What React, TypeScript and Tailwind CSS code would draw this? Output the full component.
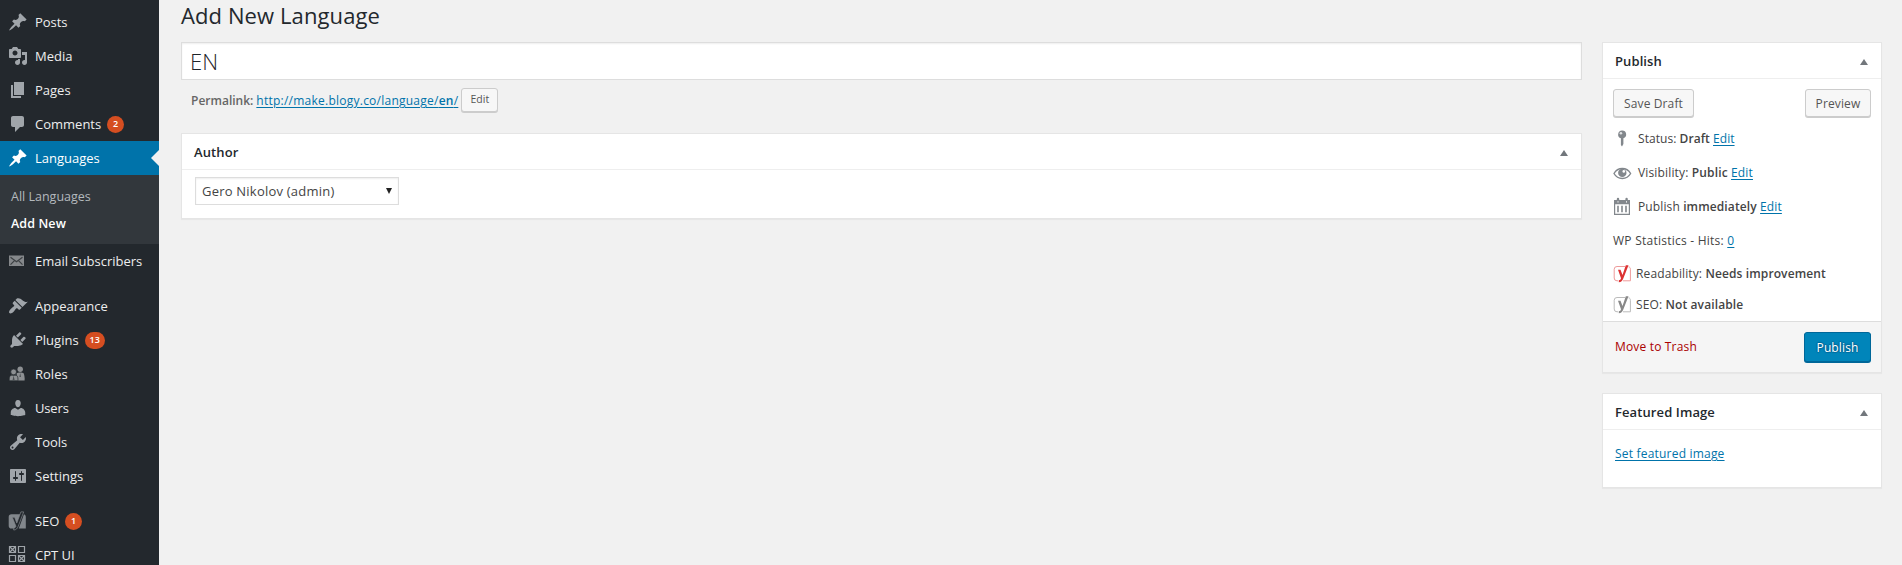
import type { ReactNode } from 'react';

const PATHS = {
  pin: 'M10.44 3.02l1.82-1.82 6.36 6.35-1.83 1.82c-1.05-.68-2.48-.57-3.41.36l-.75.75c-.92.93-1.04 2.35-.35 3.41l-1.83 1.82-2.41-2.41-2.8 2.79c-.42.42-3.38 2.71-3.8 2.29s1.86-3.39 2.28-3.81l2.79-2.79L4.1 9.36l1.83-1.82c1.05.69 2.48.57 3.4-.36l.75-.75c.93-.92 1.05-2.35.36-3.41z',
  media: 'M13 11V4c0-.55-.45-1-1-1h-1.67L9 1H5L3.67 3H2c-.55 0-1 .45-1 1v7c0 .55.45 1 1 1h10c.55 0 1-.45 1-1zM7 4.5c1.38 0 2.5 1.12 2.5 2.5S8.38 9.5 7 9.5 4.5 8.38 4.5 7 5.62 4.5 7 4.5zM14 6h5v10.5c0 1.38-1.12 2.5-2.5 2.5S14 17.88 14 16.5s1.12-2.5 2.5-2.5c.17 0 .34.02.5.05V9h-3V6zm-4 8.05V13h2v3.5c0 1.38-1.12 2.5-2.5 2.5S7 17.88 7 16.5 8.12 14 9.5 14c.17 0 .34.02.5.05z',
  pages: 'M6 15V2h10v13H6zm-1 1h8v2H3V5h2v11z',
  comments: 'M5 2h9c1.1 0 2 .9 2 2v7c0 1.1-.9 2-2 2h-2l-5 5v-5H5c-1.1 0-2-.9-2-2V4c0-1.1.9-2 2-2z',
  appearance: 'M14.48 11.06L7.41 3.99l1.5-1.5c.5-.56 2.3-.47 3.51.32 1.21.8 1.43 1.28 2.91 2.1 1.18.64 2.45 1.26 4.45.85zm-.71.71L6.7 4.7 4.93 6.47c-.39.39-.39 1.02 0 1.41l1.06 1.06c.39.39.39 1.03 0 1.42-.6.6-1.43 1.11-2.21 1.69-.35.26-.7.53-1.01.84C1.43 14.23.4 16.08 1.4 17.07c.99 1 2.84-.03 4.18-1.36.31-.31.58-.66.85-1.02.57-.78 1.08-1.61 1.69-2.21.39-.39 1.02-.39 1.41 0l1.06 1.06c.39.39 1.02.39 1.41 0z',
  plugins: 'M13.11 4.36L9.87 7.6 8 5.73l3.24-3.24c.35-.34 1.05-.2 1.56.32.52.51.66 1.21.31 1.55zm-8 1.77l.91-1.12 9.01 9.01-1.19.84c-.71.71-2.63 1.16-3.82 1.16H6.14L4.9 17.26c-.59.59-1.54.59-2.12 0-.59-.58-.59-1.53 0-2.12l1.24-1.24v-3.88c0-1.13.4-3.19 1.09-3.89zm7.26 3.97l3.24-3.24c.34-.35 1.04-.21 1.55.31.52.51.66 1.21.31 1.55l-3.24 3.25z',
  users: 'M10 9.25c-2.27 0-2.73-3.44-2.73-3.44C7 4.02 7.82 2 9.97 2c2.16 0 2.98 2.02 2.71 3.81 0 0-.41 3.44-2.68 3.44zm0 2.57L12.72 10c2.39 0 4.52 2.33 4.52 4.53v2.49s-3.65 1.13-7.24 1.13c-3.65 0-7.24-1.13-7.24-1.13v-2.49c0-2.25 1.94-4.48 4.47-4.48z',
  tools: 'M16.68 9.77c-1.34 1.34-3.3 1.67-4.95.99l-5.41 6.52c-.99.99-2.59.99-3.58 0s-.99-2.59 0-3.57l6.52-5.42c-.68-1.65-.35-3.61.99-4.95 1.28-1.28 3.12-1.62 4.72-1.06l-2.89 2.89 2.82 2.82 2.86-2.87c.53 1.58.18 3.39-1.08 4.65zM3.81 16.21c.4.39 1.04.39 1.43 0 .4-.4.4-1.04 0-1.43-.39-.4-1.03-.4-1.43 0-.39.39-.39 1.03 0 1.43z',
  settings: 'M18 16V4c0-.55-.45-1-1-1H3c-.55 0-1 .45-1 1v12c0 .55.45 1 1 1h14c.55 0 1-.45 1-1zM8 11h1c.55 0 1 .45 1 1s-.45 1-1 1H8v1.5c0 .28-.22.5-.5.5s-.5-.22-.5-.5V13H6c-.55 0-1-.45-1-1s.45-1 1-1h1V5.5c0-.28.22-.5.5-.5s.5.22.5.5V11zm5-2h-1c-.55 0-1-.45-1-1s.45-1 1-1h1V5.5c0-.28.22-.5.5-.5s.5.22.5.5V7h1c.55 0 1 .45 1 1s-.45 1-1 1h-1v5.5c0 .28-.22.5-.5.5s-.5-.22-.5-.5V9z',
};

function Glyph({ d }: { d: string }) {
  return (
    <svg viewBox="0 0 20 20" className="size-5" fill="currentColor">
      <path d={d} />
    </svg>
  );
}

function MailIcon() {
  return (
    <svg viewBox="0 0 20 20" className="size-5">
      <rect x="1" y="4.5" width="15" height="10.5" fill="#85888b" />
      <path d="M2.500 6.200l6 4.600 6-4.600M2.500 13.700l4-4M14.500 13.700l-4-4" fill="none" stroke="#3c4043" strokeWidth="1.200" />
    </svg>
  );
}

function RolesIcon() {
  return (
    <svg viewBox="0 0 20 20" className="size-5" fill="#8d9093">
      <circle cx="12.2" cy="5.2" r="2.7" />
      <path d="M8.600 9.200c1-1 6-1 7 0 .7 1.200 1.300 5 1 7.200H9z" />
      <path d="M1.300 16.800c-.3-2.300.1-4.800 1.500-5.600h5.600c1.400.8 1.800 3.300 1.500 5.600z" stroke="#23282d" strokeWidth=".7" />
      <circle cx="5.600" cy="7.900" r="2.900" stroke="#23282d" strokeWidth=".7" />
      <path d="M5.600 11.400l-1 4.600h2zM12.200 9l-.8 4h1.600z" fill="#4a4e52" />
    </svg>
  );
}

function SeoIcon() {
  return (
    <svg viewBox="0 0 20 20" className="size-5">
      <path d="M3.500 3.200H13L8.500 17.600H3.500A2.800 2.800 0 0 1 .7 14.800V6a2.800 2.800 0 0 1 2.800-2.800zM16 3.300c1.200.4 1.800 1.400 1.800 2.700v11.600h-7z" fill="#82878c" />
      <path d="M4.300 6.300h2.300l2.200 5.800L12.900.9H15.700l-5.400 14.200c-.9 2.500-2.300 3.900-4.600 3.900v-2c1.200 0 1.900-.6 2.200-1.800z" fill="#23282d" stroke="#82878c" strokeWidth=".7" />
    </svg>
  );
}

function CptIcon() {
  return (
    <svg viewBox="0 0 20 20" className="size-5" fill="none" stroke="#9ea3a8" strokeWidth="1.200">
      <path d="M1.500 1.500h6v6h-6zM10.500 1.500h6v6h-6zM1.500 10.500h6v6h-6zM10.500 10.500h6v6h-6z" />
      <path d="M2 2l5 5M7 2L2 7M11 11l5 5M16 11l-5 5" />
    </svg>
  );
}

function Badge({ children }: { children: ReactNode }) {
  return (
    <span className="ml-1.5 flex h-[17px] min-w-[17px] items-center justify-center rounded-full bg-[#d54e21] px-[5px] text-[9px] font-semibold text-white">
      {children}
    </span>
  );
}

type ItemProps = { icon: ReactNode; label: string; track?: string; badge?: string; active?: boolean };

function MenuItem({ icon, label, track = 'tracking-normal', badge, active }: ItemProps) {
  return (
    <a
      className={
        active
          ? 'relative flex h-[34px] shrink-0 items-center bg-[#0073aa] text-white'
          : 'relative flex h-[34px] shrink-0 items-center text-[#eee]'
      }
    >
      <span className={active ? 'ml-2 w-[27px] text-white' : 'ml-2 w-[27px] text-[#a0a5aa]'}>{icon}</span>
      <span className={`pt-0.5 text-[13px] whitespace-nowrap ${track}`}>{label}</span>
      {badge && <Badge>{badge}</Badge>}
      {active && (
        <span className="absolute top-[9px] right-0 border-y-8 border-r-8 border-y-transparent border-r-[#f1f1f1]" />
      )}
    </a>
  );
}

function Sidebar() {
  return (
    <nav className="flex h-full w-[159px] shrink-0 flex-col overflow-hidden bg-[#23282d] pt-[5px]">
      <MenuItem icon={<Glyph d={PATHS.pin} />} label="Posts" track="tracking-[-0.05px]" />
      <MenuItem icon={<Glyph d={PATHS.media} />} label="Media" />
      <MenuItem icon={<Glyph d={PATHS.pages} />} label="Pages" />
      <MenuItem icon={<Glyph d={PATHS.comments} />} label="Comments" badge="2" />
      <MenuItem icon={<Glyph d={PATHS.pin} />} label="Languages" active />
      <div className="flex h-[69px] shrink-0 flex-col bg-[#32373c] pt-2 pl-[11px] text-[12.5px]">
        <a className="h-[27px] leading-[27px] text-[#b4b9be]">All Languages</a>
        <a className="h-[27px] leading-[27px] font-semibold tracking-[0.1px] text-white">Add New</a>
      </div>
      <MenuItem icon={<MailIcon />} label="Email Subscribers" />
      <div className="h-[11px] shrink-0" />
      <MenuItem icon={<Glyph d={PATHS.appearance} />} label="Appearance" />
      <MenuItem icon={<Glyph d={PATHS.plugins} />} label="Plugins" badge="13" />
      <MenuItem icon={<RolesIcon />} label="Roles" />
      <MenuItem icon={<Glyph d={PATHS.users} />} label="Users" track="tracking-[-0.15px]" />
      <MenuItem icon={<Glyph d={PATHS.tools} />} label="Tools" />
      <MenuItem icon={<Glyph d={PATHS.settings} />} label="Settings" />
      <div className="h-[11px] shrink-0" />
      <MenuItem icon={<SeoIcon />} label="SEO" track="tracking-[-0.1px]" badge="1" />
      <MenuItem icon={<CptIcon />} label="CPT UI" />
    </nav>
  );
}

function Panel({ title, className, children }: { title: string; className: string; children: ReactNode }) {
  return (
    <section className={`flex flex-col border border-[#e5e5e5] bg-white shadow-[0_1px_1px_rgba(0,0,0,0.04)] ${className}`}>
      <header className="flex h-[36px] shrink-0 items-center justify-between border-b border-[#eee] pr-[13px] pl-3">
        <h2 className="pt-0.5 text-[13px] font-semibold tracking-[0.1px] text-[#23282d]">{title}</h2>
        <svg viewBox="0 0 8 6" className="mt-[3px] h-1.5 w-2" fill="#72777c">
          <path d="M4 0l4 6H0z" />
        </svg>
      </header>
      {children}
    </section>
  );
}

function Button({ className, children }: { className: string; children: ReactNode }) {
  return (
    <button
      className={`flex items-center justify-center rounded-[3px] border border-[#ccc] bg-[#f7f7f7] whitespace-nowrap text-[#555] shadow-[0_1px_0_#ccc] ${className}`}
    >
      {children}
    </button>
  );
}

function Link({ children }: { children: ReactNode }) {
  return <a className="text-[#0073aa] underline underline-offset-2">{children}</a>;
}

function KeyIcon() {
  return (
    <svg viewBox="0 0 20 20" className="size-5">
      <path d="M9 1.500a4 4 0 0 1 1.400 7.800V15L9 17.500 7.900 16V9.300A4 4 0 0 1 9 1.500z" fill="#82878c" />
      <circle cx="7.900" cy="4.300" r="1.300" fill="#dfe1e3" />
    </svg>
  );
}

function EyeIcon() {
  return (
    <svg viewBox="0 0 20 20" className="size-5">
      <path d="M1 10.500C3 7 6 5.500 9.300 5.500s6.300 1.500 8.300 5c-2 3.500-5 5-8.300 5S3 14 1 10.500z" fill="none" stroke="#82878c" strokeWidth="1.400" />
      <circle cx="9.300" cy="9.900" r="4.200" fill="#82878c" />
      <circle cx="10.800" cy="8.400" r="1.300" fill="#fff" />
    </svg>
  );
}

function CalendarIcon() {
  return (
    <svg viewBox="0 0 20 20" className="size-5" fill="#82878c">
      <path fillRule="evenodd" d="M1 3h2.800V2a1.200 1.200 0 0 1 2.400 0v1h6.200V2a1.200 1.200 0 0 1 2.400 0v1H17v15H1zM2.200 7.200v9.600h13.600V7.200z" />
      <path d="M4.200 8.700h1.600v6.600H4.200zM8.200 8.700h1.600v6.600H8.200zM12.200 8.700h1.600v6.600h-1.600z" />
      <path d="M4.500 4.200h1v1.200h-1zM13 4.200h1v1.200h-1z" fill="#fff" />
    </svg>
  );
}

function YoastIcon({ color, pale }: { color: string; pale: string }) {
  return (
    <svg viewBox="0 0 20 20" className="size-5">
      <path d="M12 2.500H4A2.800 2.800 0 0 0 1.200 5.300V14A2.800 2.800 0 0 0 4 16.800h1M15.500 2.700c1.300.3 1.900 1.200 1.900 2.600v11.500H10" fill="none" stroke={pale} strokeWidth="1" />
      <path d="M5 5.700h2.500L9.500 11l3.300-9.800h2.700L10.300 14.500c-.9 2.300-2.200 3.700-4.500 3.800v-2c1.300-.1 1.900-.8 2.200-2z" fill={color} />
    </svg>
  );
}

function Row({ icon, className, children }: { icon?: ReactNode; className: string; children: ReactNode }) {
  return (
    <div className={`flex items-center whitespace-nowrap ${className}`}>
      {icon}
      <span>{children}</span>
    </div>
  );
}

function Editor() {
  return (
    <main className="ml-[22px] flex w-[1401px] shrink-0 flex-col">
      <h1 className="h-[42px] text-[22px] leading-[30px] tracking-[0.1px] whitespace-nowrap text-[#23282d]">Add New Language</h1>
      <div className="flex h-[38px] items-center border border-[#ddd] bg-white pl-2 text-[22px] font-light text-[#1f2429] shadow-[inset_0_1px_2px_rgba(0,0,0,0.07)]">
        EN
      </div>
      <div className="mt-2 flex h-[26px] items-center pl-[10px] text-[12px] whitespace-nowrap text-[#666]">
        <span className="font-semibold">Permalink:</span>
        <a className="ml-[3px] tracking-[0.24px] text-[#0073aa] underline underline-offset-2">
          http://make.blogy.co/language/<span className="font-semibold">en</span>/
        </a>
        <Button className="ml-[3px] h-6 w-[37px] self-start text-[10.5px]">Edit</Button>
      </div>
      <Panel title="Author" className="mt-[19px] h-[86px]">
        <div className="mt-[7px] ml-[13px] flex h-7 w-[204px] items-center justify-between border border-[#ddd] pr-1.5 pl-1.5 text-[13px] tracking-[0.22px] text-[#444] shadow-[inset_0_1px_2px_rgba(0,0,0,0.07)]">
          <span className="pt-0.5">Gero Nikolov (admin)</span>
          <svg viewBox="0 0 6 6" className="size-1.5" fill="#222">
            <path d="M0 0h6L3 6z" />
          </svg>
        </div>
      </Panel>
    </main>
  );
}

function PublishPanel() {
  return (
    <Panel title="Publish" className="h-[331px] text-[12px] tracking-[0.12px] text-[#444]">
      <div className="mx-[10px] mt-[10px] flex h-[29px] shrink-0 justify-between">
        <Button className="h-7 w-[81px] pt-0.5">Save Draft</Button>
        <Button className="h-7 w-[66px] pt-0.5">Preview</Button>
      </div>
      <div className="flex grow flex-col pt-1 pl-[10px]">
        <Row icon={<KeyIcon />} className="h-[34px] gap-[5px] tracking-[0.05px]">
          Status: <b className="font-semibold">Draft</b> <Link>Edit</Link>
        </Row>
        <Row icon={<EyeIcon />} className="h-[34px] gap-[5px] tracking-[0.15px]">
          Visibility: <b className="font-semibold">Public</b> <Link>Edit</Link>
        </Row>
        <Row icon={<CalendarIcon />} className="h-[34px] gap-[5px]">
          Publish <b className="font-semibold">immediately</b> <Link>Edit</Link>
        </Row>
        <Row className="h-[34px] tracking-[0.24px]">
          WP Statistics - Hits: <Link>0</Link>
        </Row>
        <Row icon={<YoastIcon color="#dc3232" pale="#ee9a9a" />} className="h-[31px] gap-[3px]">
          Readability: <b className="font-semibold">Needs improvement</b>
        </Row>
        <Row icon={<YoastIcon color="#888" pale="#bbb" />} className="h-[32px] gap-[3px]">
          SEO: <b className="font-semibold">Not available</b>
        </Row>
      </div>
      <footer className="flex h-[51px] shrink-0 items-center justify-between border-t border-[#ddd] bg-[#f5f5f5] pr-[10px] pl-3">
        <a className="tracking-[0.17px] text-[#a00]">Move to Trash</a>
        <button className="flex h-[30px] w-[67px] items-center justify-center rounded-[3px] border border-[#006799] bg-[#0085ba] pt-0.5 text-white shadow-[0_1px_0_#006799] [text-shadow:0_-1px_1px_#006799,1px_0_1px_#006799,0_1px_1px_#006799,-1px_0_1px_#006799]">
          Publish
        </button>
      </footer>
    </Panel>
  );
}

export default function App() {
  return (
    <div className="flex h-[565px] w-[1902px] overflow-hidden bg-[#f1f1f1] font-['Open_Sans','Noto_Sans',sans-serif]">
      <Sidebar />
      <Editor />
      <aside className="ml-5 flex w-[280px] shrink-0 flex-col gap-5 pt-[42px]">
        <PublishPanel />
        <Panel title="Featured Image" className="h-[95px] text-[12px]">
          <div className="pt-[15px] pl-3 tracking-[0.2px]">
            <Link>Set featured image</Link>
          </div>
        </Panel>
      </aside>
    </div>
  );
}
